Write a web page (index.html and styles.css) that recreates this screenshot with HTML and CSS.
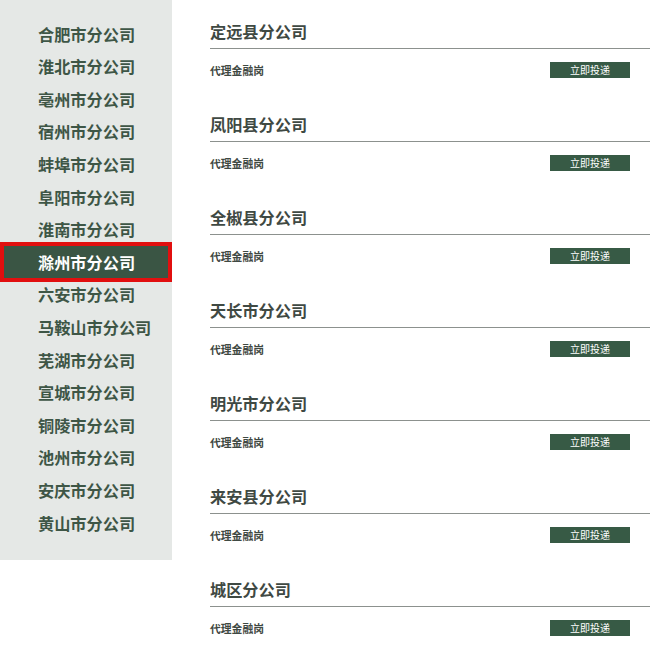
FILE: index.html
```html
<!DOCTYPE html>
<html lang="zh">
<head>
    <meta charset="UTF-8">
    <meta name="viewport" content="width=device-width, initial-scale=1.0">
    <title>分公司岗位</title>
    <link rel="stylesheet" href="styles.css">
</head>
<body>
    <div class="page">
        <ul class="side-nav">
            <li class="side-item">合肥市分公司</li>
            <li class="side-item">淮北市分公司</li>
            <li class="side-item">亳州市分公司</li>
            <li class="side-item">宿州市分公司</li>
            <li class="side-item">蚌埠市分公司</li>
            <li class="side-item">阜阳市分公司</li>
            <li class="side-item">淮南市分公司</li>
            <li class="side-item active">滁州市分公司</li>
            <li class="side-item">六安市分公司</li>
            <li class="side-item">马鞍山市分公司</li>
            <li class="side-item">芜湖市分公司</li>
            <li class="side-item">宣城市分公司</li>
            <li class="side-item">铜陵市分公司</li>
            <li class="side-item">池州市分公司</li>
            <li class="side-item">安庆市分公司</li>
            <li class="side-item">黄山市分公司</li>
        </ul>

        <div class="content">
            <div class="branch">
                <h2 class="branch-title">定远县分公司</h2>
                <div class="job-row">
                    <span class="job-name">代理金融岗</span>
                    <button class="apply-btn">立即投递</button>
                </div>
            </div>
            <div class="branch">
                <h2 class="branch-title">凤阳县分公司</h2>
                <div class="job-row">
                    <span class="job-name">代理金融岗</span>
                    <button class="apply-btn">立即投递</button>
                </div>
            </div>
            <div class="branch">
                <h2 class="branch-title">全椒县分公司</h2>
                <div class="job-row">
                    <span class="job-name">代理金融岗</span>
                    <button class="apply-btn">立即投递</button>
                </div>
            </div>
            <div class="branch">
                <h2 class="branch-title">天长市分公司</h2>
                <div class="job-row">
                    <span class="job-name">代理金融岗</span>
                    <button class="apply-btn">立即投递</button>
                </div>
            </div>
            <div class="branch">
                <h2 class="branch-title">明光市分公司</h2>
                <div class="job-row">
                    <span class="job-name">代理金融岗</span>
                    <button class="apply-btn">立即投递</button>
                </div>
            </div>
            <div class="branch">
                <h2 class="branch-title">来安县分公司</h2>
                <div class="job-row">
                    <span class="job-name">代理金融岗</span>
                    <button class="apply-btn">立即投递</button>
                </div>
            </div>
            <div class="branch">
                <h2 class="branch-title">城区分公司</h2>
                <div class="job-row">
                    <span class="job-name">代理金融岗</span>
                    <button class="apply-btn">立即投递</button>
                </div>
            </div>
        </div>
    </div>
</body>
</html>
```

FILE: styles.css
```css
body {
    margin: 0;
    background: #fff;
    font-family: "Noto Sans CJK SC", "Noto Sans", sans-serif;
}

.page {
    display: flex;
    align-items: flex-start;
}

.side-nav {
    list-style: none;
    margin: 0;
    padding: 17.7px 0 21px;
    width: 172px;
    flex-shrink: 0;
    background: #e5e8e6;
}

.side-item {
    margin: 0 4px;
    padding-left: 34px;
    font-size: 16.2px;
    font-weight: 700;
    line-height: 32.6px;
    color: #3e5646;
    white-space: nowrap;
}

.side-item.active {
    background: #3a5544;
    color: #fff;
    outline: 4px solid #e10f0f;
}

.content {
    flex: 1;
    padding: 21px 0 0 38px;
}

.branch {
    margin-bottom: 36px;
}

.branch-title {
    margin: 0;
    padding-bottom: 7px;
    font-size: 16.2px;
    font-weight: 700;
    line-height: 20px;
    color: #3f4943;
    border-bottom: 1px solid #8c918e;
}

.job-row {
    display: flex;
    justify-content: space-between;
    align-items: center;
    margin-top: 13px;
    padding-right: 20px;
    height: 16px;
}

.job-name {
    font-size: 10.8px;
    font-weight: 700;
    color: #3f4943;
}

.apply-btn {
    width: 80px;
    height: 16px;
    padding: 0;
    border: none;
    background: #375a45;
    color: #fff;
    font-family: "Noto Sans CJK SC", sans-serif;
    font-size: 10px;
    line-height: 16px;
    cursor: pointer;
}
```
